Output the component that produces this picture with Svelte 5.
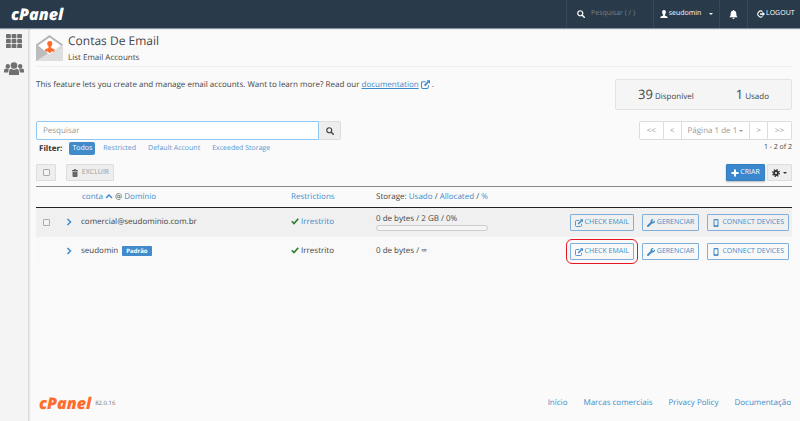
<script lang="ts">
    interface Account {
        name: string;
        isDefault: boolean;
        storage: string;
        percent: number | null;
        highlighted: boolean;
    }

    const accounts: Account[] = [
        {
            name: "comercial@seudominio.com.br",
            isDefault: false,
            storage: "0 de bytes / 2 GB / 0%",
            percent: 0,
            highlighted: false,
        },
        {
            name: "seudomin",
            isDefault: true,
            storage: "0 de bytes / ∞",
            percent: null,
            highlighted: true,
        },
    ];

    const filters = ["Todos", "Restricted", "Default Account", "Exceeded Storage"];
    const footerLinks = ["Início", "Marcas comerciais", "Privacy Policy", "Documentação"];

    let activeFilter = $state("Todos");
    let query = $state("");
</script>

{#snippet searchIcon()}
    <svg class="icon" viewBox="0 0 16 16" aria-hidden="true">
        <circle cx="6.5" cy="6.5" r="5" fill="none" stroke="currentColor" stroke-width="2.4" />
        <path d="M10.5 10.5l4 4" stroke="currentColor" stroke-width="3" stroke-linecap="round" />
    </svg>
{/snippet}

{#snippet externalIcon()}
    <svg class="icon" viewBox="0 0 16 16" aria-hidden="true">
        <path d="M8.5 3H3Q1 3 1 5v8q0 2 2 2h8q2 0 2-2V9.5" fill="none" stroke="currentColor" stroke-width="1.8" />
        <path d="M10 .5h6v6l-2-2L7.500 11 5.300 8.800l6.500-6.500z" fill="currentColor" />
    </svg>
{/snippet}

{#snippet chevronIcon()}
    <svg class="icon" viewBox="0 0 16 16" aria-hidden="true">
        <path d="M5 2l6 6-6 6" fill="none" stroke="currentColor" stroke-width="3" />
    </svg>
{/snippet}

<div class="page">
    <header class="topbar">
        <a class="logo" href="#home">cPanel</a>
        <label class="top-search">
            {@render searchIcon()}
            <input type="text" placeholder="Pesquisar ( / )" aria-label="Pesquisar" />
        </label>
        <button class="top-item user">
            <svg class="icon" viewBox="0 0 16 16" aria-hidden="true">
                <path d="M8 0C5 0 4 2 4.2 5c.2 2 1 3.500 2 4.300v1.500C4 12 .5 12.500.5 16h15c0-3.500-3.500-4-5.700-5.200V9.300c1-.8 1.800-2.300 2-4.300C12 2 11 0 8 0z" fill="currentColor" />
            </svg>
            <span>seudomin</span>
            <span class="caret"></span>
        </button>
        <button class="top-item bell" aria-label="Notificações">
            <svg class="icon" viewBox="0 0 16 16" aria-hidden="true">
                <path d="M8 0q1.200 0 1.200 1.500C12 2 13 4 13 7c0 3 1 4.500 2.500 6H.5C2 11.500 3 10 3 7c0-3 1-5 3.800-5.500Q6.800 0 8 0zM6 13.800h4Q9.800 16 8 16t-2-2.200z" fill="currentColor" />
            </svg>
        </button>
        <a class="top-item logout" href="#logout">
            <svg class="icon" viewBox="0 0 16 16" aria-hidden="true">
                <path d="M11 3A6 6 0 1 0 11 13" fill="none" stroke="currentColor" stroke-width="2.2" />
                <path d="M6 6.500h5v-3L16 8l-5 4.500v-3H6z" fill="currentColor" />
            </svg>
            <span>LOGOUT</span>
        </a>
    </header>

    <div class="body">
        <nav class="sidebar">
            <a href="#apps" aria-label="Aplicativos">
                <svg class="grid-icon" viewBox="0 0 16 14" aria-hidden="true">
                    {#each [0, 5, 10] as y}
                        {#each [0, 5.6, 11.2] as x}
                            <rect {x} {y} width="4.8" height="4.2" rx=".8" fill="currentColor" />
                        {/each}
                    {/each}
                </svg>
            </a>
            <a href="#users" aria-label="Usuários">
                <svg class="users-icon" viewBox="0 0 20 13" fill="currentColor" aria-hidden="true">
                    <circle cx="3.8" cy="4.2" r="2.2" />
                    <circle cx="16.2" cy="4.2" r="2.2" />
                    <circle cx="10" cy="3.500" r="3.300" />
                    <path d="M0 10.500V8.500q0-2 2-2h3Q4.300 8 4.200 10.500zM20 10.500V8.500q0-2-2-2h-3q.7 1.500.8 4zM5 13v-2.500Q5 7 7.200 6.800 10 8.500 12.800 6.800 15 7 15 10.500V13z" />
                </svg>
            </a>
        </nav>

        <main>
            <div class="title">
                <svg class="mail-icon" viewBox="0 0 27 27" aria-hidden="true">
                    <path d="M0 9.500L13.500 0 27 9.500V26H0z" fill="#b5b5b5" />
                    <path d="M2 10.500L13.500 2.500l11.500 8-11.500 9.500z" fill="#fff" />
                    <path d="M0 9.500L12 18.500 0 26z" fill="#bdbdbd" />
                    <path d="M27 9.500V26H0L12 18.200 13.500 19.500z" fill="#dedede" />
                    <path d="M13.800 6c-1.900 0-2.700 1.300-2.500 3 .1 1.200.6 2 1.200 2.600v1.300l-3.400 1.300v2.200h2.600l2.100 1.900 2.100-1.900h2.600v-2.200l-3.400-1.300v-1.300c.6-.6 1.100-1.400 1.200-2.600.2-1.700-.6-3-2.500-3z" fill="#ff6c2c" />
                </svg>
                <div>
                    <h1>Contas De Email</h1>
                    <h2>List Email Accounts</h2>
                </div>
            </div>

            <div class="intro">
                <p>
                    This feature lets you create and manage email accounts. Want to learn more? Read our
                    <a href="#documentation"><u>documentation</u>{@render externalIcon()}</a> .
                </p>
                <div class="stats">
                    <div><strong>39</strong> Disponível</div>
                    <div><strong>1</strong> Usado</div>
                </div>
            </div>

            <div class="controls">
                <div class="search">
                    <input type="text" placeholder="Pesquisar" aria-label="Pesquisar contas" bind:value={query} />
                    <button aria-label="Pesquisar">{@render searchIcon()}</button>
                </div>
                <div class="pager">
                    <button>&lt;&lt;</button>
                    <button>&lt;</button>
                    <button class="current">Página 1 de 1 <span class="caret"></span></button>
                    <button>&gt;</button>
                    <button>&gt;&gt;</button>
                </div>
            </div>

            <div class="filter-row">
                <div class="filters">
                    <b>Filter:</b>
                    {#each filters as filter}
                        <button class:active={filter === activeFilter} onclick={() => (activeFilter = filter)}>{filter}</button>
                    {/each}
                </div>
                <span class="range">1 - 2 of 2</span>
            </div>

            <div class="toolbar">
                <label class="btn select-all">
                    <input type="checkbox" aria-label="Selecionar todas" />
                </label>
                <button class="btn delete">
                    <svg class="icon" viewBox="0 0 16 16" aria-hidden="true">
                        <path d="M2 2h3.500l1-2h3l1 2H14v2H2zM3 5h10v9q0 2-2 2H5q-2 0-2-2z" fill="currentColor" />
                    </svg>
                    EXCLUIR
                </button>
                <button class="btn create">
                    <svg class="icon" viewBox="0 0 16 16" aria-hidden="true">
                        <path d="M6 1h4v5h5v4h-5v5H6v-5H1V6h5z" fill="currentColor" />
                    </svg>
                    CRIAR
                </button>
                <button class="btn gear" aria-label="Configurações">
                    <svg class="icon" viewBox="0 0 16 16" aria-hidden="true">
                        <circle cx="8" cy="8" r="4" fill="none" stroke="currentColor" stroke-width="3.600" />
                        <circle cx="8" cy="8" r="6.500" fill="none" stroke="currentColor" stroke-width="3" stroke-dasharray="2.550 2.550" />
                    </svg>
                    <span class="caret"></span>
                </button>
            </div>

            <table>
                <thead>
                    <tr>
                        <th class="col-check"></th>
                        <th class="col-expand"></th>
                        <th class="col-name">
                            <a href="#conta">conta
                                <svg class="icon" viewBox="0 0 16 16" aria-hidden="true">
                                    <path d="M2 12l6-6 6 6" fill="none" stroke="currentColor" stroke-width="3" />
                                </svg></a>
                            @ <a href="#dominio">Domínio</a>
                        </th>
                        <th class="col-restrictions"><a href="#restrictions">Restrictions</a></th>
                        <th class="col-storage">
                            Storage: <a href="#usado">Usado</a> / <a href="#allocated">Allocated</a> / <a href="#percent">%</a>
                        </th>
                        <th></th>
                    </tr>
                </thead>
                <tbody>
                    {#each accounts as account}
                        <tr>
                            <td class="check-cell">
                                {#if !account.isDefault}
                                    <input type="checkbox" aria-label={account.name} />
                                {/if}
                            </td>
                            <td>
                                <button class="expand" aria-label="Expandir">{@render chevronIcon()}</button>
                            </td>
                            <td>
                                {account.name}
                                {#if account.isDefault}
                                    <span class="badge">Padrão</span>
                                {/if}
                            </td>
                            <td>
                                <svg class="icon check" viewBox="0 0 16 16" aria-hidden="true">
                                    <path d="M1.500 8.500L6 13l8.500-9.500" fill="none" stroke="currentColor" stroke-width="3.400" />
                                </svg>
                                {#if account.isDefault}
                                    Irrestrito
                                {:else}
                                    <a href="#irrestrito">Irrestrito</a>
                                {/if}
                            </td>
                            <td>
                                {account.storage}
                                {#if account.percent !== null}
                                    <div class="bar"><div class="fill" style="width: {account.percent}%"></div></div>
                                {/if}
                            </td>
                            <td>
                                <div class="actions">
                                    <button class:highlighted={account.highlighted}>{@render externalIcon()} CHECK EMAIL</button>
                                    <button>
                                        <svg class="icon" viewBox="0 0 512 512" aria-hidden="true">
                                            <path d="M508 109c-2-9-14-12-20-6l-75 75-68-11-11-68 74-75c7-6 4-18-5-20-48-12-100 1-137 38-40 40-50 97-34 147L19 403c-25 25-25 65 0 90s65 25 90 0l213-213c50 17 108 6 148-34 37-37 50-90 38-137z" fill="currentColor" />
                                        </svg>
                                        GERENCIAR
                                    </button>
                                    <button>
                                        <svg class="icon" viewBox="0 0 16 16" aria-hidden="true">
                                            <path d="M5 0h6q2 0 2 2v12q0 2-2 2H5q-2 0-2-2V2q0-2 2-2zM5 2.500V12h6V2.500zM7 13v1.500h2V13z" fill="currentColor" fill-rule="evenodd" />
                                        </svg>
                                        CONNECT DEVICES
                                    </button>
                                </div>
                            </td>
                        </tr>
                    {/each}
                </tbody>
            </table>

            <footer>
                <a class="logo footer-logo" href="#cpanel">cPanel</a>
                <span class="version">82.0.16</span>
                <div class="footer-links">
                    {#each footerLinks as link}
                        <a href="#footer">{link}</a>
                    {/each}
                </div>
            </footer>
        </main>
    </div>
</div>

<style>
    :global(body) {
        background: #fafafa;
    }

    .page {
        display: flex;
        flex-direction: column;
        min-height: 100vh;
        font-family: "Open Sans", sans-serif;
        font-size: 8px;
        line-height: 12px;
        color: #444;
        text-rendering: geometricPrecision;
    }

    .page * {
        box-sizing: border-box;
    }

    button,
    input {
        font: inherit;
        color: inherit;
        text-rendering: inherit;
        margin: 0;
    }

    button {
        display: inline-flex;
        align-items: center;
        justify-content: center;
        padding: 0;
        border: 0;
        background: none;
        white-space: nowrap;
    }

    a {
        color: #428bca;
        text-decoration: none;
    }

    .icon {
        width: 8px;
        height: 8px;
        flex: none;
        vertical-align: -1px;
    }

    .caret {
        border: 2px solid transparent;
        border-top-color: currentColor;
        border-bottom: 0;
    }

    .topbar {
        display: flex;
        height: 28px;
        background: #293a4a;
        color: #fff;
        font-size: 7px;
        box-shadow: 0 1px 1px #8a939b;
        z-index: 1;
    }

    .logo {
        font-size: 16px;
        line-height: 16px;
        font-weight: 800;
        font-style: italic;
        color: #fff;
    }

    .topbar .logo {
        margin-right: auto;
        padding: 6px 0 0 11px;
    }

    .top-search,
    .top-item {
        display: flex;
        align-items: center;
        border-left: 1px solid #35495b;
        color: #fff;
    }

    .top-search {
        width: 87px;
        gap: 6px;
        padding-left: 10px;
    }

    .top-search input {
        width: 60px;
        padding: 0;
        border: 0;
        background: none;
    }

    .top-search input::placeholder {
        color: #75828e;
        opacity: 1;
    }

    .user {
        width: 66px;
        gap: 1px;
    }

    .user .caret {
        margin-left: 7px;
    }

    .bell {
        width: 28px;
    }

    .bell .icon {
        width: 9px;
        height: 9px;
    }

    .logout {
        width: 53px;
        padding-left: 9px;
        gap: 1px;
    }

    .body {
        display: flex;
        flex: 1;
    }

    .sidebar {
        display: flex;
        flex-direction: column;
        align-items: center;
        gap: 14px;
        width: 29px;
        padding-top: 6px;
        background: #f4f4f4;
        border-right: 1px solid #ddd;
        box-shadow: 1px 0 1px #e8e8e8;
    }

    .sidebar a {
        display: flex;
        color: #707070;
    }

    .grid-icon {
        width: 16px;
        height: 14px;
    }

    .users-icon {
        width: 20px;
        height: 13px;
    }

    main {
        display: flex;
        flex-direction: column;
        flex: 1;
        padding: 7px 8px 10px 7px;
    }

    .title {
        display: flex;
        gap: 5px;
        height: 32px;
        border-bottom: 1px solid #f0f0f0;
    }

    .mail-icon {
        width: 27px;
        height: 27px;
    }

    h1,
    h2 {
        margin: 0;
        font-weight: 400;
    }

    h1 {
        font-size: 12px;
        line-height: 12px;
    }

    h2 {
        font-size: 8px;
        line-height: 12px;
        padding-top: 5px;
    }

    .intro {
        display: flex;
        justify-content: space-between;
        padding-top: 12px;
    }

    .intro p {
        margin: 0;
    }

    .intro .icon {
        width: 9px;
        height: 9px;
        margin-left: 2px;
        vertical-align: -2px;
    }

    .stats {
        display: flex;
        justify-content: space-between;
        align-items: center;
        width: 177px;
        height: 31px;
        padding: 2px 22px 0;
        background: #f5f5f5;
        border: 1px solid #e3e3e3;
        border-radius: 2px;
    }

    .stats strong {
        font-size: 13px;
        font-weight: 400;
    }

    .controls {
        display: flex;
        justify-content: space-between;
        padding-top: 11px;
    }

    .search {
        display: flex;
        width: 305px;
        height: 19px;
    }

    .search input {
        flex: 1;
        padding: 1px 6px 0;
        background: #fff;
        border: 1px solid #8fc8f4;
        border-radius: 2px 0 0 2px;
    }

    .search input::placeholder {
        color: #999;
        opacity: 1;
    }

    .search button {
        width: 22px;
        background: #eee;
        border: 1px solid #ddd;
        border-left: 0;
        border-radius: 0 2px 2px 0;
    }

    .pager {
        display: flex;
        height: 19px;
    }

    .pager button {
        padding: 0 6px;
        background: #fff;
        border: 1px solid #ddd;
        border-left-width: 0;
        color: #999;
    }

    .pager button:first-child {
        padding: 0 7px;
        border-left-width: 1px;
        border-radius: 2px 0 0 2px;
    }

    .pager button:last-child {
        padding: 0 7px;
        border-radius: 0 2px 2px 0;
    }

    .pager .current {
        gap: 2px;
    }

    .filter-row {
        display: flex;
        justify-content: space-between;
        font-size: 7px;
        padding-top: 2px;
    }

    .filters {
        display: flex;
        align-items: center;
        gap: 4px;
        padding-left: 3px;
    }

    .filters b {
        font-size: 8px;
        color: #333;
        margin-right: 3px;
    }

    .filters button {
        height: 13px;
        padding: 1px 4px 0;
        border-radius: 2px;
        color: #5a95cc;
    }

    .filters .active {
        padding: 1px 3px 0;
        background: #428bca;
        color: #fff;
    }

    .toolbar {
        display: flex;
        gap: 2px;
        padding: 9px 0 5px;
    }

    .btn {
        display: flex;
        align-items: center;
        justify-content: center;
        gap: 3px;
        height: 17px;
        padding-top: 1px;
        background: #eee;
        border: 1px solid #ddd;
        border-radius: 1px;
    }

    input[type="checkbox"] {
        appearance: none;
        width: 7px;
        height: 7px;
        background: #f4f4f4;
        border: 1px solid #aaa;
        border-radius: 1px;
    }

    .select-all {
        width: 20px;
        padding: 0;
        margin-right: 8px;
    }

    .delete {
        width: 48px;
        margin-right: auto;
        color: #999;
        font-size: 7px;
    }

    .delete .icon {
        color: #666;
    }

    .create {
        width: 39px;
        gap: 1px;
        background: #3a87cd;
        border-color: #357ebd;
        color: #fff;
        font-size: 7px;
        box-shadow: 0 1px 2px #bbb;
    }

    .gear {
        width: 25px;
        color: #333;
    }

    table {
        width: 100%;
        border-collapse: collapse;
        table-layout: fixed;
        border-top: 1px solid #888;
    }

    th,
    td {
        padding: 0;
        text-align: left;
        font-weight: 400;
        vertical-align: middle;
        white-space: nowrap;
    }

    thead tr {
        height: 21px;
        border-bottom: 1px solid #222;
    }

    tbody tr {
        height: 29px;
    }

    tbody tr:nth-child(odd) {
        background: #f0f0f0;
    }

    tbody tr:nth-child(even) {
        background: #f9f9f9;
    }

    .col-check {
        width: 29px;
    }

    .col-expand {
        width: 16px;
    }

    .col-name {
        width: 210px;
    }

    thead .col-name {
        padding-left: 1px;
    }

    .col-restrictions {
        width: 85px;
    }

    .col-storage {
        width: 20%;
    }

    .check-cell {
        padding-left: 7px;
    }

    .check-cell input {
        display: block;
    }

    .expand {
        display: flex;
        color: #428bca;
    }

    .check {
        color: #2f7d32;
    }

    .badge {
        display: inline-block;
        margin-left: 2px;
        padding: 0 4px;
        background: #428bca;
        border-radius: 1px;
        color: #fff;
        font-size: 6px;
        line-height: 10px;
        font-weight: 700;
        vertical-align: 0;
    }

    .bar {
        width: 112px;
        height: 6px;
        background: #f5f5f5;
        border: 1px solid #ccc;
        border-radius: 3px;
    }

    .fill {
        height: 4px;
        background: #428bca;
    }

    .actions {
        display: flex;
        justify-content: flex-end;
        gap: 8px;
        padding-right: 3px;
    }

    .actions button {
        position: relative;
        height: 17px;
        gap: 2px;
        padding: 1px 4px 0;
        border: 1px solid #7fb0dc;
        border-radius: 1px;
        color: #428bca;
        font-size: 7px;
    }

    .highlighted::after {
        content: "";
        position: absolute;
        inset: -5px;
        border: 1px solid #ea1520;
        border-radius: 6px;
    }

    footer {
        display: flex;
        align-items: center;
        margin-top: auto;
        padding-left: 3px;
    }

    .footer-logo {
        color: #ff6c2c;
    }

    .version {
        padding-left: 4px;
        font-size: 6px;
        color: #777;
    }

    .footer-links {
        display: flex;
        gap: 16px;
        margin-left: auto;
        padding-right: 1px;
    }
</style>
